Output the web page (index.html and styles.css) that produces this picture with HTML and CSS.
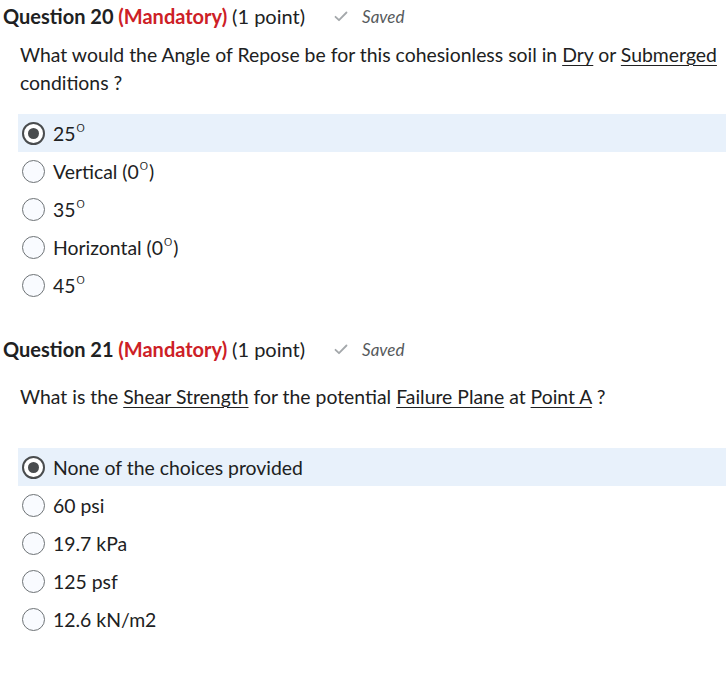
FILE: index.html
```html
<!DOCTYPE html>
<html lang="en">
<head>
<meta charset="utf-8">
<title>Quiz</title>
<link rel="stylesheet" href="styles.css">
</head>
<body>
<section class="question q20">
  <div class="qhead">
    <h2 class="qtitle">Question 20 <span class="mand">(Mandatory)</span> <span class="pts">(1 point)</span></h2>
    <span class="saved"><svg class="check" width="14" height="11" viewBox="0 0 14 11"><path d="M1.5 5.8 L5 9.2 L12.5 1.5" fill="none" stroke="#a4a8ab" stroke-width="1.8" stroke-linecap="round" stroke-linejoin="round"/></svg><em>Saved</em></span>
  </div>
  <p class="qtext">What would the Angle of Repose be for this cohesionless soil in <u>Dry</u> or <u>Submerged</u> conditions ?</p>
  <ul class="options">
    <li class="opt selected"><span class="radio"></span><span>25<span class="deg">º</span></span></li>
    <li class="opt"><span class="radio"></span><span>Vertical (0<span class="deg">º</span>)</span></li>
    <li class="opt"><span class="radio"></span><span>35<span class="deg">º</span></span></li>
    <li class="opt"><span class="radio"></span><span>Horizontal (0<span class="deg">º</span>)</span></li>
    <li class="opt"><span class="radio"></span><span>45<span class="deg">º</span></span></li>
  </ul>
</section>
<section class="question q21">
  <div class="qhead">
    <h2 class="qtitle">Question 21 <span class="mand">(Mandatory)</span> <span class="pts">(1 point)</span></h2>
    <span class="saved"><svg class="check" width="14" height="11" viewBox="0 0 14 11"><path d="M1.5 5.8 L5 9.2 L12.5 1.5" fill="none" stroke="#a4a8ab" stroke-width="1.8" stroke-linecap="round" stroke-linejoin="round"/></svg><em>Saved</em></span>
  </div>
  <p class="qtext">What is the <u>Shear Strength</u> for the potential <u>Failure Plane</u> at <u>Point A</u> ?</p>
  <ul class="options">
    <li class="opt selected"><span class="radio"></span><span>None of the choices provided</span></li>
    <li class="opt"><span class="radio"></span><span>60 psi</span></li>
    <li class="opt"><span class="radio"></span><span>19.7 kPa</span></li>
    <li class="opt"><span class="radio"></span><span>125 psf</span></li>
    <li class="opt"><span class="radio"></span><span>12.6 kN/m2</span></li>
  </ul>
</section>
</body>
</html>
```
FILE: styles.css
```css
* { box-sizing: border-box; }
body {
  margin: 0;
  background: #ffffff;
  font-family: Lato, "Open Sans", sans-serif;
  color: #202122;
}
.question { display: flex; flex-direction: column; }
.qhead {
  display: flex;
  align-items: center;
  height: 32px;
  padding-left: 3px;
}
.qtitle {
  margin: 0;
  font-size: 20px;
  font-weight: 700;
  color: #202122;
  white-space: nowrap;
}
.mand { color: #cd2026; }
.pts { font-weight: 400; }
.saved {
  display: flex;
  align-items: center;
  margin-left: 29px;
  color: #565a5c;
  font-size: 17px;
}
.check { margin-right: 14px; }
.saved em { font-style: italic; }
.qtext {
  margin: 0;
  padding-left: 20px;
  font-size: 19.4px;
  line-height: 28px;
  color: #202122;
}
.qtext u { text-decoration-thickness: 1px; text-underline-offset: 3px; }
.options {
  list-style: none;
  margin: 0;
  padding: 0 0 0 18px;
}
.opt {
  display: flex;
  align-items: center;
  height: 38px;
  padding-left: 4px;
  gap: 8px;
  font-size: 19.4px;
  color: #202122;
}
.deg {
  font-size: 1.3em;
  font-weight: 300;
  line-height: 0;
  vertical-align: -1px;
}
.opt.selected { background: #e8f1fb; }
.radio {
  width: 23px;
  height: 23px;
  border-radius: 50%;
  border: 1px solid #6e7376;
  background: #f9fbff;
  flex: none;
  display: flex;
  align-items: center;
  justify-content: center;
}
.selected .radio { border: 2px solid #494c4e; background: #ffffff; }
.selected .radio::after {
  content: "";
  width: 11px;
  height: 11px;
  border-radius: 50%;
  background: #494c4e;
}
.q20 .qtext { margin-top: 9px; margin-bottom: 17px; }
.q20 .options { margin-bottom: 29px; }
.q21 .qtext { margin-top: 18px; margin-bottom: 37px; }
```
